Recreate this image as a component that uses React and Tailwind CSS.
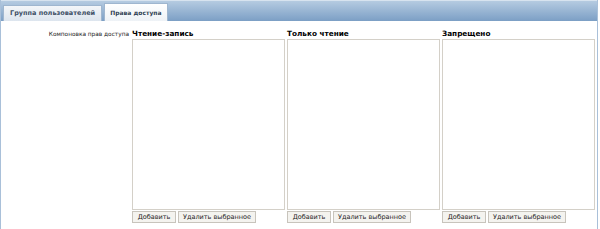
import React from "react"

const columns = ["Чтение-запись", "Только чтение", "Запрещено"]

const Column = ({ title }) => (
  <div className="flex flex-col w-[153px]">
    <div className="h-[11px] text-[7.3px] leading-[11px] font-bold text-black">{title}</div>
    <div className="h-[171px] border border-[#d4d0c8] bg-white"></div>
    <div className="flex gap-[2px] mt-[1px]">
      <button className="h-[12px] w-[44px] border border-[#c8c4bc] bg-[#f4f3ef] text-[6.5px] leading-[10px] text-[#222]">Добавить</button>
      <button className="h-[12px] w-[78px] border border-[#c8c4bc] bg-[#f4f3ef] text-[6.5px] leading-[10px] text-[#222]">Удалить выбранное</button>
    </div>
  </div>
)

export default function App() {
  return (
    <div className="w-[600px] h-[229px] bg-white overflow-hidden font-['DejaVu_Sans',sans-serif]">
      <div className="mr-[2px] border-x border-[#a9c0d9] h-[229px]">
        {/* tab bar */}
        <div className="h-[21px] bg-gradient-to-b from-[#b5cbe1] to-[#7c9fc5] border-t border-[#d7e3ef] flex items-end pl-[2px] gap-[2px]">
          <div className="h-[16px] px-[6px] bg-gradient-to-b from-[#f3f6f9] to-[#dde5ee] border border-b-0 border-[#9fb6cf] text-[6.5px] font-bold leading-[15px] text-[#3e5066]">Группа пользователей</div>
          <div className="h-[18px] px-[5px] bg-gradient-to-b from-[#ffffff] to-[#eef2f6] border border-b-0 border-[#9fb6cf] text-[6px] font-bold leading-[17px] text-[#2f3f52]">Права доступа</div>
        </div>
        {/* content */}
        <div className="flex pt-[7px]">
          <div className="w-[131px] pr-[3px] pt-[1px] text-right text-[5.8px] leading-[11px] text-[#222]">Компоновка прав доступа</div>
          <div className="flex gap-[2px]">
            {columns.map((c) => (
              <Column key={c} title={c} />
            ))}
          </div>
        </div>
      </div>
    </div>
  )
}
